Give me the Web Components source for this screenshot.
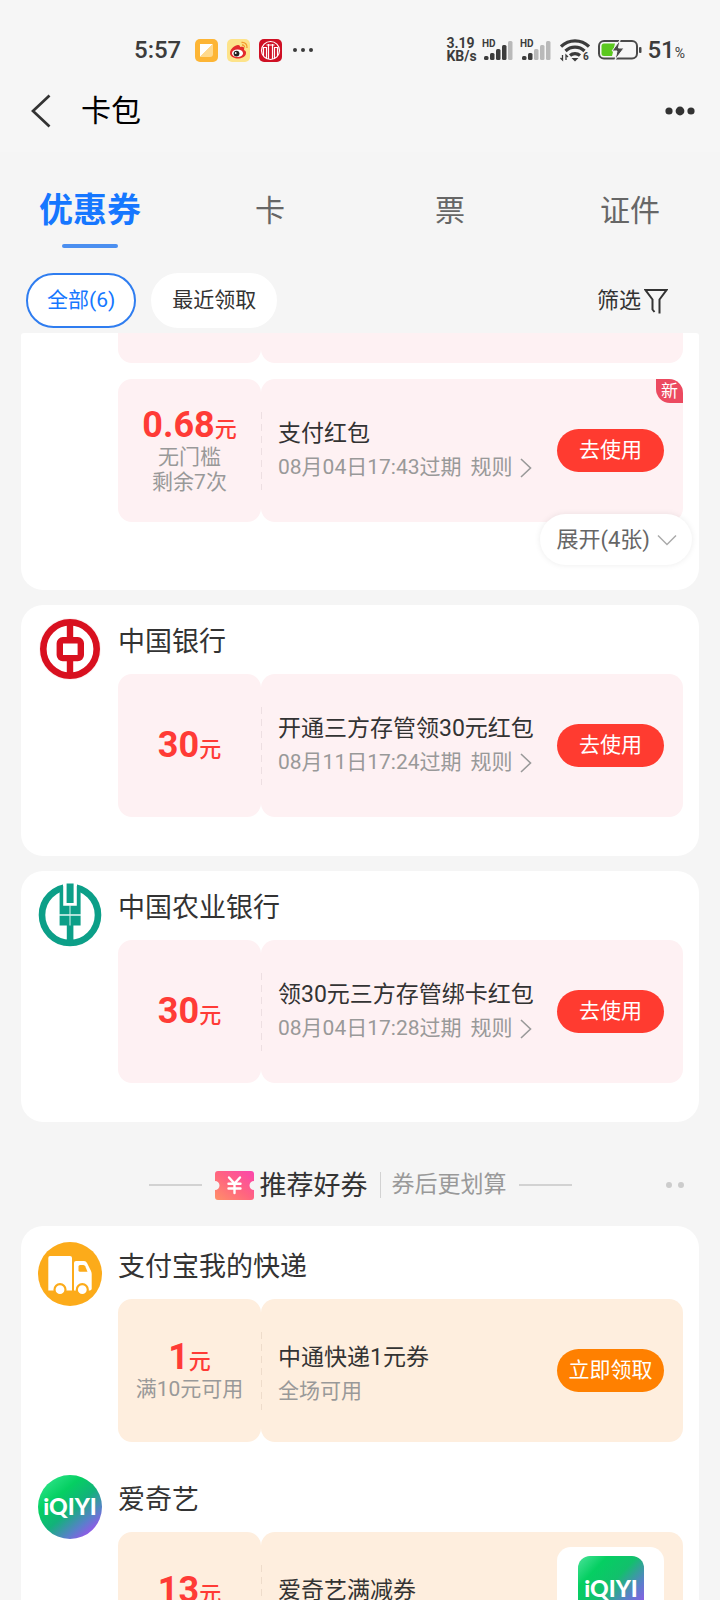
<!DOCTYPE html>
<html lang="zh-CN">
<head>
<meta charset="utf-8">
<meta name="viewport" content="width=device-width, initial-scale=1">
<title>卡包</title>
<style>
    body {
        margin: 0;
        height: 100vh;
        display: flex;
        flex-direction: column;
        background: #f5f5f5;
        color: #333;
        font-family: Roboto, "Noto Sans CJK SC", sans-serif;
    }
    main {
        flex: 1;
        min-height: 0;
        overflow-y: auto;
        scrollbar-width: none;
        padding: 0 21px;
    }
    coupon-card + coupon-card {
        margin-top: 15px;
    }
</style>
</head>
<body>
    <status-bar></status-bar>
    <app-header>卡包</app-header>
    <tab-bar>
        <tab-item selected>优惠券</tab-item>
        <tab-item>卡</tab-item>
        <tab-item>票</tab-item>
        <tab-item>证件</tab-item>
    </tab-bar>
    <filter-bar>
        <filter-chip selected>全部(6)</filter-chip>
        <filter-chip>最近领取</filter-chip>
    </filter-bar>
    <main>
        <coupon-card continued more="展开(4张)">
            <coupon-merchant continued>
                <coupon-ticket tail></coupon-ticket>
                <coupon-ticket amount="0.68" action="去使用" badge="新" rules>
                    <span slot="note">无门槛</span>
                    <span slot="note">剩余7次</span>
                    支付红包
                    <span slot="detail">08月04日17:43过期</span>
                </coupon-ticket>
            </coupon-merchant>
        </coupon-card>
        <coupon-card>
            <coupon-merchant name="中国银行" logo="boc">
                <coupon-ticket amount="30" action="去使用" rules>
                    开通三方存管领30元红包
                    <span slot="detail">08月11日17:24过期</span>
                </coupon-ticket>
            </coupon-merchant>
        </coupon-card>
        <coupon-card>
            <coupon-merchant name="中国农业银行" logo="abc">
                <coupon-ticket amount="30" action="去使用" rules>
                    领30元三方存管绑卡红包
                    <span slot="detail">08月04日17:28过期</span>
                </coupon-ticket>
            </coupon-merchant>
        </coupon-card>
        <section-title>
            推荐好券
            <span slot="aside">券后更划算</span>
        </section-title>
        <coupon-card offers>
            <coupon-merchant name="支付宝我的快递" logo="express">
                <coupon-ticket tone="orange" amount="1" action="立即领取">
                    <span slot="note">满10元可用</span>
                    中通快递1元券
                    <span slot="detail">全场可用</span>
                </coupon-ticket>
            </coupon-merchant>
            <coupon-merchant name="爱奇艺" logo="iqiyi">
                <coupon-ticket tone="orange" amount="13" product="iqiyi-app">
                    <span slot="note"></span>
                    爱奇艺满减券
                </coupon-ticket>
            </coupon-merchant>
        </coupon-card>
    </main>

<script>
(function () {
    'use strict';

    const base = `
        *, *::before, *::after { box-sizing: border-box; }
        button {
            margin: 0;
            padding: 0;
            border: 0;
            background: none;
            color: inherit;
            font: inherit;
            white-space: nowrap;
        }
        svg { display: block; flex: none; }
    `;

    class BaseElement extends HTMLElement {
        constructor () {
            super();
            this.attachShadow({ mode: 'open' });
        }

        connectedCallback () {
            const template = document.createElement('template');
            template.innerHTML = `<style>${base}${this.styles()}</style>${this.markup()}`;
            this.shadowRoot.replaceChildren(template.content.cloneNode(true));
        }

        styles () {
            return '';
        }

        markup () {
            return '<slot></slot>';
        }
    }

    const logos = {
        boc: `
            <svg width="64" height="64" viewBox="0 0 64 64">
                <circle cx="32" cy="32" r="31" fill="#fdf0f1"/>
                <circle cx="32" cy="32" r="26.7" fill="#fff" stroke="#d8101f" stroke-width="6.6"/>
                <path d="M32 4v18M32 42v18" stroke="#d8101f" stroke-width="6.4"/>
                <rect x="21.8" y="23.3" width="21" height="17.8" rx="3" fill="#fff" stroke="#d8101f" stroke-width="6.4"/>
            </svg>`,
        abc: `
            <svg width="64" height="64" viewBox="0 0 64 64">
                <circle cx="32" cy="32" r="28" fill="#fff" stroke="#0c9f88" stroke-width="6.6"/>
                <path d="M25 0h14v24H25z" fill="#fff"/>
                <path d="M21.6 5l3.6-2v19.8h13.6V3l3.8 2v26.4h-21zM21.6 32.6h21v10h-21zM28.6 .6h7V20h-7zM28.8 42h6.6v19h-6.6z" fill="#0c9f88"/>
                <path d="M32 22v20.5M21 32h22" stroke="#d9f3ee" stroke-width="1"/>
            </svg>`,
        express: `
            <svg width="64" height="64" viewBox="0 0 64 64">
                <circle cx="32" cy="32" r="32" fill="#fcab1a"/>
                <path d="M12 14h20q2 0 2 2v32.500H10.300V16q0-2 1.700-2z" fill="#fff"/>
                <path d="M36 48.500V21q0-2 2-2h8q2 0 3 2l4 8q.7 1.500.7 3v14.500q0 2-2 2z" fill="#fff"/>
                <path d="M40.500 24.500q0-1.500 1.500-1.500h3q1.500 0 2.200 1.300l2.300 5.400h-7.500q-1.500 0-1.500-1.500z" fill="#fcab1a"/>
                <circle cx="22" cy="47.700" r="5.500" fill="#fff" stroke="#fcab1a" stroke-width="2.200"/>
                <circle cx="44.300" cy="47.700" r="5.500" fill="#fff" stroke="#fcab1a" stroke-width="2.200"/>
            </svg>`,
        iqiyi: `
            <svg width="64" height="64" viewBox="0 0 64 64">
                <defs>
                    <linearGradient id="g" x1=".1" y1=".05" x2=".85" y2=".95">
                        <stop offset="0" stop-color="#2fe58a"/>
                        <stop offset=".3" stop-color="#05cf62"/>
                        <stop offset=".55" stop-color="#12b27a"/>
                        <stop offset=".8" stop-color="#5a7fcb"/>
                        <stop offset="1" stop-color="#a44cf2"/>
                    </linearGradient>
                </defs>
                <circle cx="32" cy="32" r="32" fill="url(#g)"/>
                <text x="32" y="40" text-anchor="middle" font-family="Lato, sans-serif" font-weight="900" font-size="23" fill="#fff">iQIYI</text>
            </svg>`,
        'iqiyi-app': `
            <svg width="66" height="66" viewBox="0 0 66 66">
                <defs>
                    <linearGradient id="g" x1="0" y1="0" x2=".95" y2=".9">
                        <stop offset="0" stop-color="#4be39a"/>
                        <stop offset=".25" stop-color="#05cf62"/>
                        <stop offset=".5" stop-color="#12c06c"/>
                        <stop offset=".75" stop-color="#5a7fcb"/>
                        <stop offset="1" stop-color="#a44cf2"/>
                    </linearGradient>
                </defs>
                <rect width="66" height="66" rx="12" fill="url(#g)"/>
                <text x="33" y="41" text-anchor="middle" font-family="Lato, sans-serif" font-weight="900" font-size="23" fill="#fff">iQIYI</text>
            </svg>`
    };

    class BrandLogo extends BaseElement {
        styles () {
            return ':host { display: block; }';
        }

        markup () {
            return logos[this.getAttribute('name')] || '';
        }
    }

    class StatusBar extends BaseElement {
        styles () {
            return `
                :host {
                    display: flex;
                    align-items: center;
                    justify-content: space-between;
                    height: 40px;
                    padding: 30px 35px 0 134px;
                    background: #f6f6f6;
                    color: #3c3c3c;
                    font-size: 24px;
                    font-weight: 500;
                }
                div { display: flex; align-items: center; }
                .apps { gap: 9px; margin-left: 14px; }
                .speed { display: block; width: 36px; font-size: 14px; line-height: 13px; font-weight: 700; }
                .wifi { margin: 0 8px 0 2px; }
                .percent { margin-left: 5px; }
                small { font-size: 14px; font-weight: 400; }
            `;
        }

        markup () {
            const bars = (active) => [4, 7, 11, 15, 19].map((h, i) =>
                `<rect x="${2 + i * 6}" y="${22 - h}" width="4.500" height="${h}" rx="1.500" fill="${i < active ? '#3c3c3c' : '#b9b9b9'}"/>`
            ).join('');
            const signal = (active) => `
                <svg width="38" height="24" viewBox="0 0 38 24">
                    ${bars(active)}
                    <text x="0" y="9" font-size="10" font-weight="700" fill="#3c3c3c" stroke="#f6f6f6" stroke-width="2" paint-order="stroke">HD</text>
                </svg>`;
            return `
                <div>
                    <span>5:57</span>
                    <div class="apps">
                        <svg width="23" height="23" viewBox="0 0 23 23">
                            <rect width="23" height="23" rx="5" fill="#fdb535"/>
                            <path d="M5 5h13L5 18z" fill="#fff"/>
                            <path d="M18 5v10q0 3-3 3H5z" fill="#ffd98c"/>
                        </svg>
                        <svg width="23" height="23" viewBox="0 0 23 23">
                            <rect width="23" height="23" rx="5" fill="#fde38a"/>
                            <path d="M3 14c0-4 5-8 8-8 2 0 2 1 2 2 3-1 5 0 4 3 2 1 2 2 2 3 0 4-5 5.500-8 5.500S3 18 3 14z" fill="#e32a2c"/>
                            <ellipse cx="10.500" cy="14.300" rx="5.500" ry="3.800" fill="#fff"/>
                            <circle cx="9.500" cy="14.600" r="2.900" fill="#222"/>
                            <circle cx="8.700" cy="14" r=".9" fill="#fff"/>
                            <path d="M14.500 3.500c3.500-.5 6 2 5.500 5.500M15 6c1.500-.2 2.800 1 2.500 2.500" fill="none" stroke="#f29a2e" stroke-width="1.300"/>
                        </svg>
                        <svg width="23" height="23" viewBox="0 0 23 23">
                            <rect width="23" height="23" rx="5" fill="#cf1024"/>
                            <g fill="none" stroke="#fff" stroke-width="1.200">
                                <circle cx="11.500" cy="11.500" r="9"/>
                                <path d="M4.500 17V8.500h3V19M9.500 20V5M13.500 20V5M18.500 17V8.500h-3V19M7.500 6h8"/>
                            </g>
                        </svg>
                        <svg width="24" height="6" viewBox="0 0 24 6" fill="#3c3c3c">
                            <circle cx="4" cy="3" r="2"/><circle cx="12" cy="3" r="2"/><circle cx="20" cy="3" r="2"/>
                        </svg>
                    </div>
                </div>
                <div>
                    <div class="speed">3.19<br>KB/s</div>
                    ${signal(4)}
                    ${signal(2)}
                    <svg class="wifi" width="30" height="24" viewBox="0 0 30 24">
                        <g fill="none" stroke="#3c3c3c" stroke-width="3.200">
                            <path d="M1 8.500a20 20 0 0 1 28 0M5.500 13a13.500 13.500 0 0 1 19 0M10 17.500a7.500 7.500 0 0 1 10 0"/>
                        </g>
                        <path d="M11.500 20h7L15 23.500z" fill="#3c3c3c"/>
                        <path d="M2.500 17v5l-2-2M6 22v-5l2 2" fill="none" stroke="#3c3c3c" stroke-width="1.300"/>
                        <text x="23" y="22" font-size="10" font-weight="700" fill="#3c3c3c">6</text>
                    </svg>
                    <svg width="44" height="22" viewBox="0 0 44 22">
                        <rect x="1" y="2" width="38" height="17.500" rx="5" fill="#f6f6f6" stroke="#4a4a4a" stroke-width="2"/>
                        <path d="M6 4.500h11l-3 12.500H6q-2.500 0-2.500-2.500V7q0-2.500 2.500-2.500z" fill="#5bc81f"/>
                        <path d="M22 1l-8 11h5l-2 9 9-12h-5.500z" fill="#4a4a4a" stroke="#f6f6f6" stroke-width="1"/>
                        <rect x="41" y="8" width="2.500" height="6" rx="1" fill="#4a4a4a"/>
                    </svg>
                    <div class="percent"><span>51<small>%</small></span></div>
                </div>
            `;
        }
    }

    class AppHeader extends BaseElement {
        styles () {
            return `
                :host {
                    display: flex;
                    align-items: center;
                    height: 82px;
                    padding: 0 24px 0 31px;
                    background: #f6f6f6;
                    color: #000;
                }
                h1 { flex: 1; margin: 0 0 0 30px; font-size: 30px; line-height: 40px; font-weight: 400; }
            `;
        }

        markup () {
            return `
                <button type="button" aria-label="返回">
                    <svg width="20" height="34" viewBox="0 0 20 34">
                        <path d="M18.500 1.500L2 17l16.500 15.500" fill="none" stroke="#333" stroke-width="2.700"/>
                    </svg>
                </button>
                <h1><slot></slot></h1>
                <button type="button" aria-label="更多">
                    <svg width="32" height="10" viewBox="0 0 32 10" fill="#333">
                        <circle cx="5" cy="5" r="3.600"/><circle cx="16" cy="5" r="4.400"/><circle cx="27" cy="5" r="3.600"/>
                    </svg>
                </button>
            `;
        }
    }

    class TabBar extends BaseElement {
        styles () {
            return `
                :host { display: block; padding: 33px 0 24px; }
                div { display: grid; grid-template-columns: repeat(4, 1fr); }
            `;
        }

        markup () {
            return '<div><slot></slot></div>';
        }
    }

    class TabItem extends BaseElement {
        styles () {
            return `
                :host { display: block; }
                button {
                    display: flex;
                    flex-direction: column;
                    align-items: center;
                    width: 100%;
                    gap: 8px;
                    color: #666;
                    font-size: 30px;
                    line-height: 51px;
                }
                button::after { content: ""; width: 56px; height: 4px; border-radius: 2px; }
                :host([selected]) button { color: #1677ff; font-size: 34px; font-weight: 700; }
                :host([selected]) button::after { background: #4b8ff0; }
            `;
        }

        markup () {
            return '<button type="button"><slot></slot></button>';
        }
    }

    class FilterBar extends BaseElement {
        styles () {
            return `
                :host {
                    display: flex;
                    align-items: center;
                    gap: 15px;
                    padding: 1px 52px 5px 26px;
                }
                button {
                    display: flex;
                    align-items: center;
                    gap: 3px;
                    margin-left: auto;
                    font-size: 22px;
                    line-height: 30px;
                }
            `;
        }

        markup () {
            return `
                <slot></slot>
                <button type="button">筛选
                    <svg width="24" height="26" viewBox="0 0 24 26">
                        <path d="M10.500 24L8.500 21.500V11.500L1.500 2h21l-7 9.500V25.500" fill="none" stroke="#333" stroke-width="2"/>
                    </svg>
                </button>
            `;
        }
    }

    class FilterChip extends BaseElement {
        styles () {
            return `
                :host { display: block; }
                button {
                    padding: 0 19px;
                    border: 2px solid #fff;
                    border-radius: 28px;
                    background: #fff;
                    font-size: 21px;
                    line-height: 51px;
                }
                :host([selected]) button { border-color: #2f7df0; color: #1677ff; }
            `;
        }

        markup () {
            return '<button type="button"><slot></slot></button>';
        }
    }

    class CouponCard extends BaseElement {
        styles () {
            return `
                :host {
                    display: flex;
                    flex-direction: column;
                    gap: 21px;
                    position: relative;
                    padding: 0 16px 39px 17px;
                    border-radius: 22px;
                    background: #fff;
                }
                :host([continued]) { padding-bottom: 68px; border-radius: 3px 3px 22px 22px; }
                :host([offers]) { padding-top: 4px; }
                .more {
                    position: absolute;
                    right: 7px;
                    bottom: 25px;
                    display: flex;
                    align-items: center;
                    gap: 7px;
                    height: 51px;
                    padding: 0 15px 0 16px;
                    border-radius: 26px;
                    background: #fff;
                    box-shadow: 0 0 6px rgba(0, 0, 0, .08);
                    color: #666;
                    font-size: 22px;
                    line-height: 30px;
                }
            `;
        }

        markup () {
            const more = this.getAttribute('more');
            return `
                <slot></slot>
                ${more ? `
                    <button class="more" type="button">${more}
                        <svg width="20" height="12" viewBox="0 0 20 12">
                            <path d="M1 1.500l9 9 9-9" fill="none" stroke="#aaa" stroke-width="1.500"/>
                        </svg>
                    </button>` : ''}
            `;
        }
    }

    class CouponMerchant extends BaseElement {
        styles () {
            return `
                :host {
                    display: grid;
                    grid-template-columns: 64px minmax(0, 1fr);
                    gap: 0 16px;
                    padding-top: 12px;
                }
                :host([continued]) { padding-top: 0; }
                h2 { margin: 0 0 7px; color: #333; font-size: 27px; line-height: 50px; font-weight: 400; }
                .tickets { display: flex; flex-direction: column; gap: 16px; }
            `;
        }

        markup () {
            const name = this.getAttribute('name');
            return `
                <div>${name ? `<brand-logo name="${this.getAttribute('logo')}"></brand-logo>` : ''}</div>
                <div>
                    ${name ? `<h2>${name}</h2>` : ''}
                    <div class="tickets"><slot></slot></div>
                </div>
            `;
        }
    }

    class CouponTicket extends BaseElement {
        styles () {
            return `
                :host {
                    --fill: #fef1f3;
                    --dash: #eddfe2;
                    --accent: #ff3b30;
                    display: grid;
                    grid-template-columns: 143px minmax(0, 1fr);
                    position: relative;
                    min-height: 143px;
                }
                :host([tone="orange"]) { --fill: #feeede; --dash: #eedccb; --accent: #ff8000; }
                .stub, .body { display: flex; border-radius: 14px; background: var(--fill); }
                :host([tail]) { min-height: 30px; }
                :host([tail]) .stub, :host([tail]) .body { border-radius: 0 0 14px 14px; }
                .stub {
                    flex-direction: column;
                    align-items: center;
                    justify-content: center;
                    padding-top: 3px;
                    color: #999;
                    font-size: 21px;
                    line-height: 25px;
                }
                .amount {
                    color: #ff3b36;
                    font-size: 22px;
                    font-weight: 500;
                    line-height: 31px;
                    white-space: nowrap;
                }
                .amount b { font-size: 36px; font-weight: 700; }
                ::slotted([slot="note"]) { display: block; min-height: 25px; }
                .body { align-items: center; justify-content: space-between; padding: 0 19px 0 17px; }
                .body::before {
                    content: "";
                    align-self: center;
                    width: 1px;
                    height: 78px;
                    margin: 0 16px 0 -17px;
                    background: repeating-linear-gradient(var(--dash) 0 7px, transparent 7px 12px);
                }
                :host([tail]) .body::before { content: none; }
                .text { flex: 1; min-width: 0; white-space: nowrap; }
                :host([tone="orange"]) .text { padding-top: 8px; }
                h3 { margin: 0; font-size: 23px; line-height: 34px; font-weight: 400; color: #333; }
                p {
                    display: flex;
                    align-items: center;
                    gap: 9px;
                    margin: 0;
                    min-height: 33px;
                    color: #999;
                    font-size: 21px;
                    line-height: 33px;
                }
                a { display: flex; align-items: center; gap: 7px; color: inherit; text-decoration: none; }
                .use {
                    width: 107px;
                    border-radius: 22px;
                    background: var(--accent);
                    color: #fff;
                    font-size: 21px;
                    line-height: 43px;
                }
                .product {
                    display: flex;
                    justify-content: center;
                    width: 107px;
                    height: 113px;
                    padding-top: 9px;
                    border-radius: 14px;
                    background: #fff;
                }
                .badge {
                    position: absolute;
                    top: 0;
                    right: 0;
                    width: 27px;
                    border-radius: 0 14px 0 14px;
                    background: #ec4a60;
                    color: #fff;
                    font-size: 17px;
                    line-height: 24px;
                    text-align: center;
                }
            `;
        }

        markup () {
            if (this.hasAttribute('tail')) {
                return '<div class="stub"></div><div class="body"></div>';
            }
            const action = this.getAttribute('action');
            const badge = this.getAttribute('badge');
            const product = this.getAttribute('product');
            return `
                <div class="stub">
                    <div class="amount"><b>${this.getAttribute('amount')}</b>元</div>
                    <slot name="note"></slot>
                </div>
                <div class="body">
                    <div class="text">
                        <h3><slot></slot></h3>
                        <p>
                            <slot name="detail"></slot>
                            ${this.hasAttribute('rules') ? `
                                <a href="#rules">规则
                                    <svg width="12" height="20" viewBox="0 0 12 20">
                                        <path d="M1 1l9.500 9L1 19" fill="none" stroke="#999" stroke-width="1.600"/>
                                    </svg>
                                </a>` : ''}
                        </p>
                    </div>
                    ${action ? `<button class="use" type="button">${action}</button>` : ''}
                    ${product ? `<div class="product"><brand-logo name="${product}"></brand-logo></div>` : ''}
                </div>
                ${badge ? `<span class="badge">${badge}</span>` : ''}
            `;
        }
    }

    class SectionTitle extends BaseElement {
        styles () {
            return `
                :host {
                    display: flex;
                    align-items: center;
                    justify-content: center;
                    position: relative;
                    height: 60px;
                    padding: 33px 0 11px;
                }
                .line { width: 53px; height: 2px; background: #d2d2d2; }
                .icon { margin: 0 6px 0 13px; }
                h2 { margin: 0; padding-top: 2px; font-size: 27px; font-weight: 400; line-height: 40px; }
                .aside {
                    margin: 0 12px;
                    padding-left: 11px;
                    border-left: 1px solid #d2d2d2;
                    color: #999;
                    font-size: 23px;
                    line-height: 26px;
                }
                .dots { position: absolute; right: 14px; }
            `;
        }

        markup () {
            return `
                <span class="line"></span>
                <svg class="icon" width="39" height="29" viewBox="0 0 39 29">
                    <defs>
                        <linearGradient id="g" x1="0" y1="1" x2="1" y2="0">
                            <stop offset="0" stop-color="#ff9068"/>
                            <stop offset=".5" stop-color="#ff6480"/>
                            <stop offset="1" stop-color="#fb45ae"/>
                        </linearGradient>
                    </defs>
                    <path d="M3 0h33q3 0 3 3v7a4.500 4.500 0 0 0 0 9v7q0 3-3 3H3q-3 0-3-3v-7a4.500 4.500 0 0 0 0-9V3q0-3 3-3z" fill="url(#g)"/>
                    <path d="M14 6.500l5.500 6 5.500-6M19.500 12.500V22M13.500 12.800h12M13.500 17.500h12" fill="none" stroke="#fff" stroke-width="2.400" stroke-linecap="round"/>
                </svg>
                <h2><slot></slot></h2>
                <span class="aside"><slot name="aside"></slot></span>
                <span class="line"></span>
                <svg class="dots" width="20" height="6" viewBox="0 0 20 6" fill="#ccc">
                    <circle cx="4" cy="3" r="3"/><circle cx="16" cy="3" r="3"/>
                </svg>
            `;
        }
    }

    window.customElements.define('brand-logo', BrandLogo);
    window.customElements.define('status-bar', StatusBar);
    window.customElements.define('app-header', AppHeader);
    window.customElements.define('tab-bar', TabBar);
    window.customElements.define('tab-item', TabItem);
    window.customElements.define('filter-bar', FilterBar);
    window.customElements.define('filter-chip', FilterChip);
    window.customElements.define('coupon-card', CouponCard);
    window.customElements.define('coupon-merchant', CouponMerchant);
    window.customElements.define('coupon-ticket', CouponTicket);
    window.customElements.define('section-title', SectionTitle);
})();
</script>
</body>
</html>
